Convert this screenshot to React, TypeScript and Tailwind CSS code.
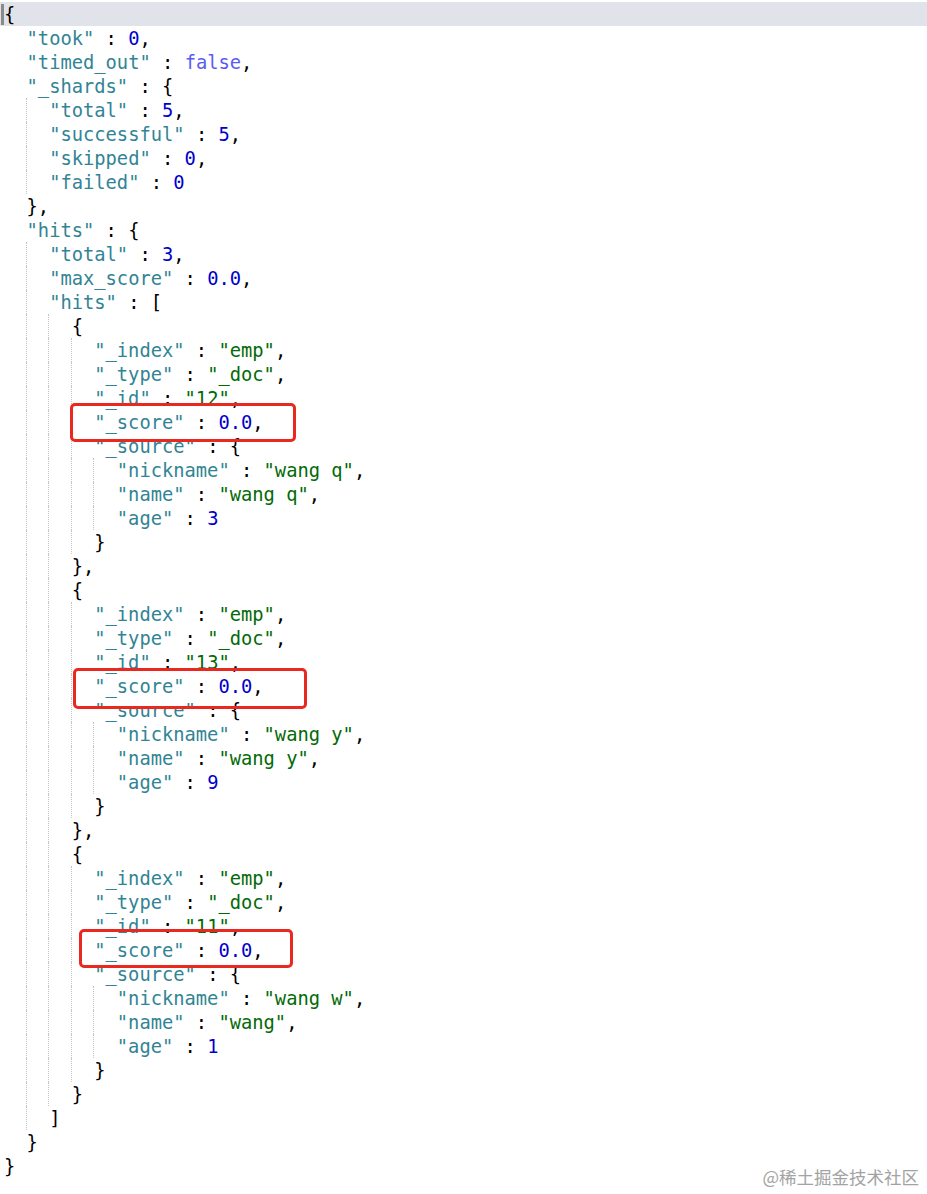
import React from "react";

const SRC = `{
  "took" : 0,
  "timed_out" : false,
  "_shards" : {
    "total" : 5,
    "successful" : 5,
    "skipped" : 0,
    "failed" : 0
  },
  "hits" : {
    "total" : 3,
    "max_score" : 0.0,
    "hits" : [
      {
        "_index" : "emp",
        "_type" : "_doc",
        "_id" : "12",
        "_score" : 0.0,
        "_source" : {
          "nickname" : "wang q",
          "name" : "wang q",
          "age" : 3
        }
      },
      {
        "_index" : "emp",
        "_type" : "_doc",
        "_id" : "13",
        "_score" : 0.0,
        "_source" : {
          "nickname" : "wang y",
          "name" : "wang y",
          "age" : 9
        }
      },
      {
        "_index" : "emp",
        "_type" : "_doc",
        "_id" : "11",
        "_score" : 0.0,
        "_source" : {
          "nickname" : "wang w",
          "name" : "wang",
          "age" : 1
        }
      }
    ]
  }
}`;

type Tok = { t: string; c: string };

function tokenize(s: string): Tok[] {
  const out: Tok[] = [];
  const re = /("[^"]*")|(\d+(?:\.\d+)?)|(true|false|null)|([^"\d]+?(?=["\d]|true|false|null|$))/g;
  let m: RegExpExecArray | null;
  while ((m = re.exec(s)) !== null) {
    if (m[0] === "") {
      re.lastIndex++;
      continue;
    }
    if (m[1]) {
      const rest = s.slice(re.lastIndex);
      const isKey = /^\s*:/.test(rest);
      out.push({ t: m[1], c: isKey ? "text-[#318495]" : "text-[#036a07]" });
    } else if (m[2]) {
      out.push({ t: m[2], c: "text-[#0000cd]" });
    } else if (m[3]) {
      out.push({ t: m[3], c: "text-[#585cf6]" });
    } else {
      out.push({ t: m[0], c: "text-black" });
    }
  }
  return out;
}

function Line({ text, active }: { text: string; active?: boolean }) {
  const indent = text.length - text.trimStart().length;
  const levels = Math.floor(indent / 2);
  const body = text.trimStart();
  const toks = tokenize(body);
  return (
    <div
      className={
        active
          ? "flex h-[24px] leading-[24px] whitespace-pre pl-[4px] bg-[#e0e4ea]"
          : "flex h-[24px] leading-[24px] whitespace-pre pl-[4px]"
      }
    >
      {Array.from({ length: levels }).map((_, i) => (
        <span
          key={i}
          className={
            i < levels - 1
              ? "inline-block w-[2ch] h-[24px] shrink-0 border-r border-dotted border-[#c4c4c4]"
              : "inline-block w-[2ch] h-[24px] shrink-0"
          }
        />
      ))}
      <span className="pt-[1px]">
        {toks.map((tk, i) => (
          <span key={i} className={tk.c}>
            {tk.t}
          </span>
        ))}
      </span>
    </div>
  );
}

export default function App() {
  const lines = SRC.split("\n");
  return (
    <div className="relative w-[927px] h-[1194px] bg-white overflow-hidden">
      <div className="pt-[2px] font-['DejaVu_Sans_Mono',monospace] text-[18.75px]">
        {lines.map((l, i) => (
          <Line key={i} text={l} active={i === 0} />
        ))}
      </div>
      {/* cursor */}
      <div className="absolute left-[1px] top-[4px] w-[3px] h-[21px] bg-[#8a8a8a]" />
      {/* red highlight boxes */}
      <div className="absolute left-[70px] top-[403px] w-[226px] h-[39px] border-[3.5px] border-[#e9291f] rounded-[5px]" />
      <div className="absolute left-[73px] top-[668px] w-[234px] h-[41px] border-[3.5px] border-[#e9291f] rounded-[5px]" />
      <div className="absolute left-[79px] top-[929px] w-[214px] h-[39px] border-[3.5px] border-[#e9291f] rounded-[5px]" />
      {/* watermark */}
      <div className="absolute right-[8px] bottom-[5px] leading-[24px] text-[17.5px] text-[#a3a3a3] font-['Noto_Sans_CJK_SC',sans-serif] whitespace-nowrap">
        @稀土掘金技术社区
      </div>
    </div>
  );
}
